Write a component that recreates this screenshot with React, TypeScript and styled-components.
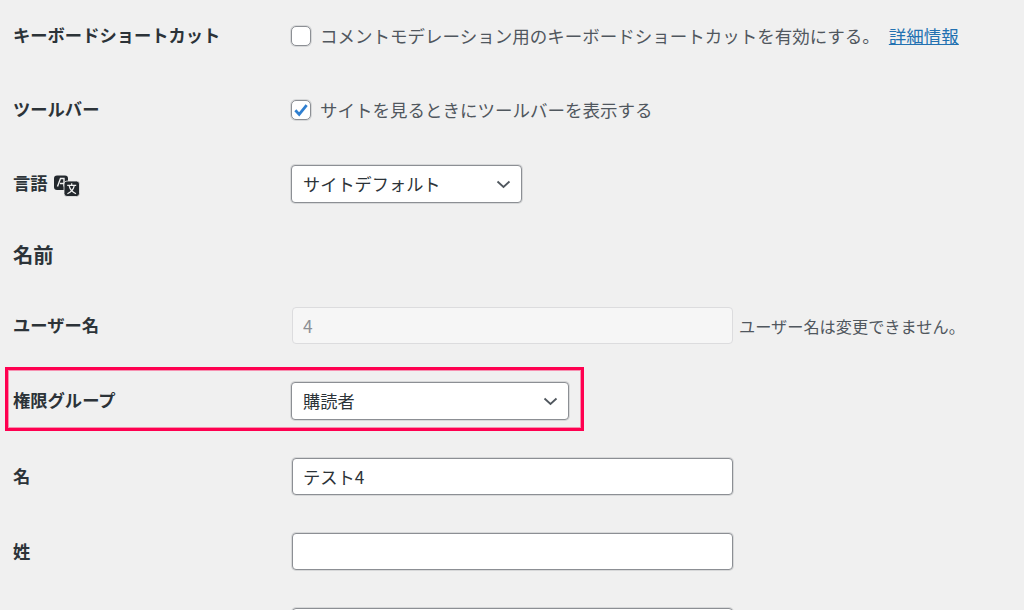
import React from "react";
import styled, { createGlobalStyle } from "styled-components";

const FONT = `"Noto Sans CJK JP", "Noto Sans", sans-serif`;

const Global = createGlobalStyle`
  html, body { margin: 0; padding: 0; background: #f0f0f0; }
  body { font-family: ${FONT}; overflow: hidden; }
  #root { height: 610px; overflow: hidden; }
`;

const Form = styled.div`
  display: flex;
  flex-direction: column;
  width: 1024px;
  height: 610px;
  overflow: hidden;
  background: #f0f0f0;
`;

const Row = styled.div<{ $h: number }>`
  position: relative;
  flex: none;
  height: ${(p) => p.$h}px;
  padding-left: 13px;
  display: grid;
  grid-template-columns: 278px 1fr;
  align-items: center;
`;

const Label = styled.div`
  display: flex;
  align-items: center;
  gap: 6px;
  padding-bottom: 2px;
  font-size: 17.3px;
  font-weight: 700;
  color: #2c3338;
  line-height: 24px;
`;

const Heading = styled.div`
  padding-bottom: 2px;
  font-size: 20.3px;
  font-weight: 700;
  color: #2c3338;
  line-height: 26px;
`;

const Field = styled.div`
  display: flex;
  align-items: center;
  gap: 6px;
  font-size: 17.5px;
  color: #50575e;
  line-height: 24px;
`;

const LastField = styled(Field)`
  align-self: start;
  padding-top: 19px;
`;

const Box = styled.span`
  flex: none;
  width: 20px;
  height: 20px;
  box-sizing: border-box;
  margin-right: 3px;
  background: #fff;
  border: 1px solid #8c8f94;
  box-shadow: 0 0 0 1px rgba(140, 143, 148, 0.25);
  border-radius: 5px;
  display: flex;
  align-items: center;
  justify-content: center;
`;

const DocLink = styled.a`
  color: #2271b1;
  text-decoration: underline;
  margin-left: 3px;
`;

const Select = styled.div<{ $w: number }>`
  width: ${(p) => p.$w}px;
  height: 38px;
  box-sizing: border-box;
  padding: 0 9px 0 11px;
  background: #fff;
  border: 1px solid #8c8f94;
  box-shadow: 0 0 0 1px rgba(140, 143, 148, 0.25);
  border-radius: 4px;
  display: flex;
  align-items: center;
  justify-content: space-between;
  font-size: 17.2px;
  color: #2c3338;
`;

const TextInput = styled.input`
  width: 441px;
  height: 37px;
  margin-left: 1px;
  box-sizing: border-box;
  padding: 0 10px;
  background: #fff;
  border: 1px solid #8c8f94;
  box-shadow: 0 0 0 1px rgba(140, 143, 148, 0.25);
  border-radius: 4px;
  font-family: ${FONT};
  font-size: 17.3px;
  color: #2c3338;
  outline: none;
  &:disabled {
    background: #f6f6f6;
    border-color: #dcdcde;
    box-shadow: none;
    color: #8c8f94;
    -webkit-text-fill-color: #8c8f94;
    opacity: 1;
  }
`;

const Note = styled.span`
  font-size: 16.2px;
  color: #50575e;
  white-space: nowrap;
`;

const Highlight = styled.div`
  position: absolute;
  left: 5px;
  top: 5px;
  width: 579px;
  height: 64px;
  box-sizing: border-box;
  border: 3px solid #ff0050;
  box-shadow: inset 0 0 0 1px rgba(255, 0, 80, 0.4);
  pointer-events: none;
`;

const TranslateSvg = styled.svg`
  flex: none;
  margin-top: 5px;
`;

const Chevron = () => (
  <svg width="17" height="16" viewBox="0 0 17 16" fill="none">
    <path d="M2.5 5.5 L8.5 11 L14.5 5.5" stroke="#50575e" strokeWidth="1.8" />
  </svg>
);

const Check = () => (
  <svg width="16" height="16" viewBox="0 0 15 15" fill="none">
    <path d="M2.2 7.8 L5.8 11.6 L12.8 3" stroke="#2f7fd0" strokeWidth="2.6" />
  </svg>
);

const Translate = () => (
  <TranslateSvg width="26" height="22" viewBox="0 0 26 22">
    <rect x="0" y="0.5" width="14" height="14.5" rx="3" fill="#23282d" />
    <path d="M3.5 11.5 L6.5 3.5 H10 V11.5 M6 8.5 H10" fill="none" stroke="#f0f0f0" strokeWidth="1.4" />
    <rect x="10" y="6" width="15.5" height="15.5" rx="3" fill="#23282d" stroke="#f0f0f0" strokeWidth="0.8" />
    <path d="M17.7 8.3 V9.9 M13.2 10.3 H22.2 M15.2 11 C16 14.5 18.5 17 22 18.8 M20.2 11 C19.4 14.5 17 17 13.4 18.8" fill="none" stroke="#f0f0f0" strokeWidth="1.2" />
  </TranslateSvg>
);

export default function App() {
  return (
    <>
      <Global />
      <Form>
        <Row $h={72}>
          <Label>キーボードショートカット</Label>
          <Field>
            <Box />
            コメントモデレーション用のキーボードショートカットを有効にする。
            <DocLink href="#">詳細情報</DocLink>
          </Field>
        </Row>
        <Row $h={75}>
          <Label>ツールバー</Label>
          <Field>
            <Box>
              <Check />
            </Box>
            サイトを見るときにツールバーを表示する
          </Field>
        </Row>
        <Row $h={74}>
          <Label>
            言語
            <Translate />
          </Label>
          <Field>
            <Select $w={231}>
              サイトデフォルト
              <Chevron />
            </Select>
          </Field>
        </Row>
        <Row $h={68}>
          <Heading>名前</Heading>
        </Row>
        <Row $h={73}>
          <Label>ユーザー名</Label>
          <Field>
            <TextInput disabled value="4" readOnly />
            <Note>ユーザー名は変更できません。</Note>
          </Field>
        </Row>
        <Row $h={77}>
          <Label>権限グループ</Label>
          <Field>
            <Select $w={278}>
              購読者
              <Chevron />
            </Select>
          </Field>
          <Highlight />
        </Row>
        <Row $h={75}>
          <Label>名</Label>
          <Field>
            <TextInput defaultValue="テスト4" />
          </Field>
        </Row>
        <Row $h={75}>
          <Label>姓</Label>
          <Field>
            <TextInput defaultValue="" />
          </Field>
        </Row>
        <Row $h={75}>
          <span />
          <LastField>
            <TextInput defaultValue="" />
          </LastField>
        </Row>
      </Form>
    </>
  );
}
